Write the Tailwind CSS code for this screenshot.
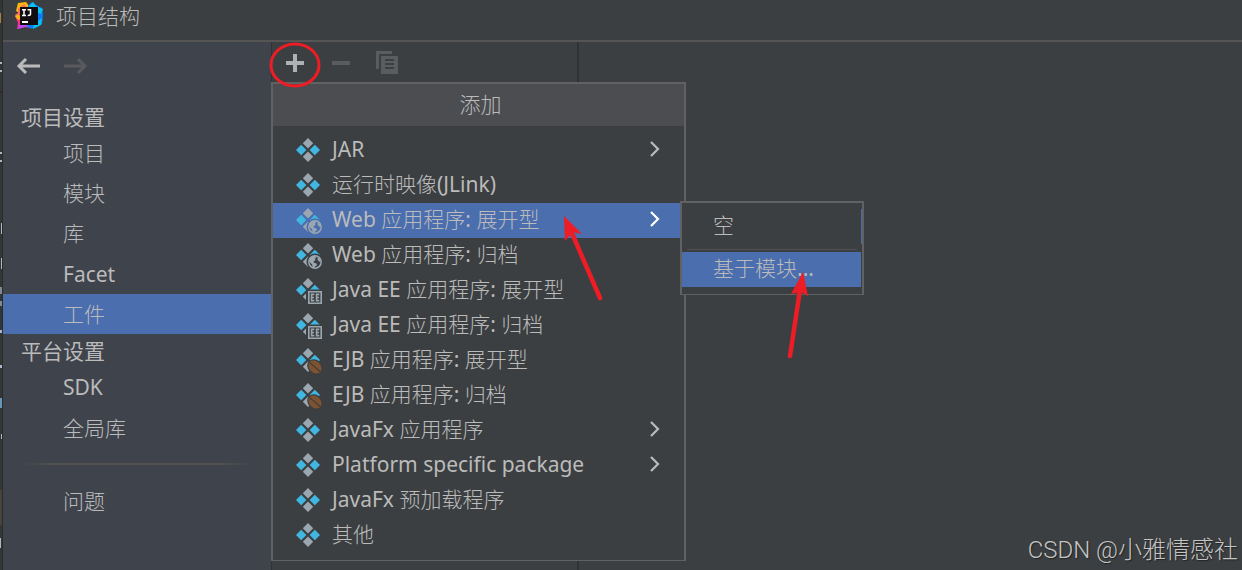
<!DOCTYPE html>
<html lang="zh-CN">
  <head>
    <meta charset="UTF-8" />
    <meta name="viewport" content="width=device-width, initial-scale=1.0" />
    <title>项目结构</title>
    <script src="https://cdn.jsdelivr.net/npm/@tailwindcss/browser@4"></script>
  </head>
  <body
    class="relative flex h-screen overflow-hidden bg-[#3c3f41] font-['Noto_Sans','Noto_Sans_CJK_SC_Light','Noto_Sans_CJK_SC',sans-serif] text-[21px] leading-[33px] text-[#bbbbbb]"
  >
    <!-- shared icons -->
    <svg class="hidden">
      <symbol id="artifact" viewBox="0 0 28 28">
        <path fill="#9aa7b0" d="M13 1l5.200 5.200L13 11.400 7.800 6.200zM13 14.600l5.200 5.200L13 25l-5.200-5.200z" />
        <path fill="#40b6e0" d="M6.200 7.800l5.200 5.200-5.200 5.200L1 13zM19.800 7.800L25 13l-5.200 5.200-5.200-5.200z" />
      </symbol>
      <symbol id="globe" viewBox="0 0 14 14">
        <circle cx="7" cy="7" r="6.200" fill="none" stroke="#9aa7b0" stroke-width="1.500" />
        <path fill="#9aa7b0" d="M1 4L3.500 1.500 7 .8l1.500 1.400-1.500 1L7.500 5 5.500 6.500l.5 1.300 2.500.7.5 1.700-2 1.300L6.500 13 4.500 12 4.200 9.500 1.500 7zM9.500 2.500L12 4l.8 3-1.800-.5-1.500-2z" />
      </symbol>
      <symbol id="ee" viewBox="0 0 14 13">
        <path fill="none" stroke="#9aa7b0" stroke-width="1.600" d="M.8.800h12.400v11.400H.8z" />
        <path fill="none" stroke="#9aa7b0" stroke-width="1.600" d="M6.300 3.400H3.600v6.200h2.700M3.600 6.500H6M11.300 3.400H8.600v6.200h2.700M8.600 6.500H11" />
      </symbol>
      <symbol id="bean" viewBox="0 0 16 16">
        <ellipse cx="8" cy="8" rx="8.500" ry="7" fill="#3c3f41" transform="rotate(45 8 8)" />
        <ellipse cx="8" cy="8" rx="7.300" ry="5.600" fill="#7f5230" transform="rotate(45 8 8)" />
        <path fill="none" stroke="#3c3f41" stroke-width="1.200" d="M2.500 3.500L8 8l5.500 5" />
      </symbol>
      <symbol id="chevron" viewBox="0 0 12 16">
        <path fill="none" stroke="currentColor" stroke-width="2.200" d="M2 1l7 7-7 7" />
      </symbol>
    </svg>

    <!-- editor edge behind the dialog -->
    <div aria-hidden="true" class="w-[3px] shrink-0 border-r border-[#2b2b2b] bg-[#323634]">
      <svg class="h-[570px] w-[2px]" viewBox="0 0 2 570" fill="#a9b7c6">
        <path fill="#b07a45" d="M0 13h1v10H0z" />
        <path fill="#2b2b2b" d="M0 91h2v2H0z" />
        <path d="M0 62h2v2H0zM0 70h2v2H0zM0 152h2v2H0zM0 160h2v2H0zM1 223h1v11H1zM1 258h1v11H1z" />
        <path fill="#7f8b91" d="M0 287h2v7H0zM0 301h2v5H0z" />
        <path d="M0 330h2v3H0zM0 365h2v3H0zM1 434h1v5H1zM0 538h1v10H0z" />
        <path fill="#6897bb" d="M0 398h2v10H0z" />
        <path fill="#49443a" d="M0 490h2v35H0z" />
      </svg>
    </div>

    <main class="flex min-w-0 flex-1 flex-col">
      <header class="flex h-[42px] shrink-0 items-start gap-[13px] border-b-2 border-[#555555] pl-3">
        <svg class="mt-[2px] size-[28px]" viewBox="0 0 28 28">
          <path fill="#fdb60d" d="M3 1l8-1 3 4-8 8-5-3z" />
          <path fill="#fe6f61" d="M3 7l6-5 7 9-8 10-5-4-3-4 3-2z" />
          <path fill="#fe2e83" d="M0 14l6-3 5 14-9 2 1-6z" />
          <path fill="#fdb60d" d="M0 14l4-2 2 5-3 1z" />
          <path fill="#b74af7" d="M5 20l9-2 2 8-6-1-7 2z" />
          <path fill="#087cfa" d="M13 4l4-4 4 3 6 3 1 7-1 9-10 5-5-3z" />
          <path fill="#07c3f2" d="M14 4l4-4 3 4 7 3-2 5-9-3zM19 22l8-6-1 7-8 4z" />
          <path fill="#100c10" d="M5 5h18v18H5z" />
          <path fill="none" stroke="#ffffff" stroke-width="1.500" d="M7 7.800h4M9 8v5.500M7 13.500h4M12.500 7.800h3v4.200q0 1.500-2.800 1.500" />
          <path fill="#ffffff" d="M7 19h6v2H7z" />
        </svg>
        <h1 class="leading-8">项目结构</h1>
      </header>

      <div class="flex min-h-0 flex-1">
        <aside class="w-[268px] shrink-0 bg-[#3f434c]">
          <div class="flex h-12 items-center gap-6 pl-[13px]">
            <button type="button" aria-label="后退" class="text-[#bbbbbb]">
              <svg class="h-[18px] w-6" viewBox="0 0 24 18" fill="none" stroke="currentColor" stroke-width="3">
                <path d="M24 9H3M10 2L3 9l7 7" />
              </svg>
            </button>
            <button type="button" aria-label="前进" disabled class="text-[#585a5c]">
              <svg class="h-[18px] w-6" viewBox="0 0 24 18" fill="none" stroke="currentColor" stroke-width="3">
                <path d="M0 9h21M14 2l7 7-7 7" />
              </svg>
            </button>
          </div>
          <nav class="pt-[10px] leading-10">
            <h2 class="h-[34px] pl-[18px] font-['Noto_Sans_CJK_SC',sans-serif] leading-8">项目设置</h2>
            <a href="#" class="block h-10 pl-[60px] leading-[38px]">项目</a>
            <a href="#" class="block h-10 pl-[60px] leading-[38px]">模块</a>
            <a href="#" class="block h-10 pl-[60px] leading-[38px]">库</a>
            <a href="#" class="block pl-[60px]">Facet</a>
            <a href="#" aria-current="page" class="block bg-[#4b6eaf] pl-[60px]">工件</a>
            <h2 class="h-[34px] pl-[18px] font-['Noto_Sans_CJK_SC',sans-serif] leading-8">平台设置</h2>
            <a href="#" class="block h-10 pl-[60px] leading-[38px]">SDK</a>
            <a href="#" class="block pl-[60px]">全局库</a>
            <div class="mx-4 mt-[15px] mb-4 h-[2px] bg-[linear-gradient(to_right,transparent,#515151_15%,#515151_85%,transparent)]"></div>
            <a href="#" class="block pl-[60px]">问题</a>
          </nav>
        </aside>

        <section class="relative w-[308px] shrink-0 border-r-2 border-l border-[#323232]">
          <div class="flex h-[42px] items-center gap-6 pl-3">
            <button type="button" aria-label="添加">
              <svg class="size-[22px]" viewBox="0 0 22 22">
                <path stroke="#afb1b3" stroke-width="4" d="M11 2v18M2 11h18" />
              </svg>
            </button>
            <button type="button" aria-label="移除" disabled>
              <svg class="size-[22px]" viewBox="0 0 22 22">
                <path stroke="#595b5d" stroke-width="4" d="M2 11h18" />
              </svg>
            </button>
            <button type="button" aria-label="复制" disabled>
              <svg class="size-6" viewBox="0 0 24 24">
                <path fill="#5a5c5e" d="M0 0h16v3H3v15H0z" />
                <path fill="#5a5c5e" fill-rule="evenodd" d="M5 5h17v18H5zM9 8v2h9V8zM9 12v2h9v-2zM9 16v2h9v-2z" />
              </svg>
            </button>
          </div>

          <!-- add menu -->
          <div class="absolute top-10 -left-px z-10 w-[415px] border-2 border-b border-[#616161] bg-[#3c3f41]">
            <h2 class="h-[42px] bg-[#4b4d51] pl-1 text-center leading-10">添加</h2>
            <ul class="py-[7px]">
              <li>
                <button type="button" class="flex h-[35px] w-full items-start gap-[9px] pr-[23px] pl-[22px] text-left">
                  <svg class="mt-1 size-7"><use href="#artifact" /></svg>
                  <span class="flex-1">JAR</span>
                  <svg class="mt-2 h-4 w-3"><use href="#chevron" /></svg>
                </button>
              </li>
              <li>
                <button type="button" class="flex h-[35px] w-full items-start gap-[9px] pr-[23px] pl-[22px] text-left">
                  <svg class="mt-1 size-7"><use href="#artifact" /></svg>
                  <span>运行时映像(JLink)</span>
                </button>
              </li>
              <li>
                <button type="button" class="flex h-[35px] w-full items-start gap-[9px] bg-[#4b6eaf] pr-[23px] pl-[22px] text-left">
                  <svg class="mt-1 size-7">
                    <use href="#artifact" />
                    <circle cx="20" cy="20" r="8.500" fill="#4b6eaf" />
                    <use href="#globe" x="13" y="13" width="14" height="14" />
                  </svg>
                  <span class="flex-1">Web 应用程序: 展开型</span>
                  <svg class="mt-2 h-4 w-3 text-white"><use href="#chevron" /></svg>
                </button>
              </li>
              <li>
                <button type="button" class="flex h-[35px] w-full items-start gap-[9px] pr-[23px] pl-[22px] text-left">
                  <svg class="mt-1 size-7">
                    <use href="#artifact" />
                    <circle cx="20" cy="20" r="8.500" fill="#3c3f41" />
                    <use href="#globe" x="13" y="13" width="14" height="14" />
                  </svg>
                  <span>Web 应用程序: 归档</span>
                </button>
              </li>
              <li>
                <button type="button" class="flex h-[35px] w-full items-start gap-[9px] pr-[23px] pl-[22px] text-left">
                  <svg class="mt-1 size-7">
                    <use href="#artifact" />
                    <path fill="#3c3f41" d="M11 12.500h17V28H11z" />
                    <use href="#ee" x="13" y="14" width="14" height="13" />
                  </svg>
                  <span>Java EE 应用程序: 展开型</span>
                </button>
              </li>
              <li>
                <button type="button" class="flex h-[35px] w-full items-start gap-[9px] pr-[23px] pl-[22px] text-left">
                  <svg class="mt-1 size-7">
                    <use href="#artifact" />
                    <path fill="#3c3f41" d="M11 12.500h17V28H11z" />
                    <use href="#ee" x="13" y="14" width="14" height="13" />
                  </svg>
                  <span>Java EE 应用程序: 归档</span>
                </button>
              </li>
              <li>
                <button type="button" class="flex h-[35px] w-full items-start gap-[9px] pr-[23px] pl-[22px] text-left">
                  <svg class="mt-1 size-7">
                    <use href="#artifact" />
                    <use href="#bean" x="12" y="12" width="16" height="16" />
                  </svg>
                  <span>EJB 应用程序: 展开型</span>
                </button>
              </li>
              <li>
                <button type="button" class="flex h-[35px] w-full items-start gap-[9px] pr-[23px] pl-[22px] text-left">
                  <svg class="mt-1 size-7">
                    <use href="#artifact" />
                    <use href="#bean" x="12" y="12" width="16" height="16" />
                  </svg>
                  <span>EJB 应用程序: 归档</span>
                </button>
              </li>
              <li>
                <button type="button" class="flex h-[35px] w-full items-start gap-[9px] pr-[23px] pl-[22px] text-left">
                  <svg class="mt-1 size-7"><use href="#artifact" /></svg>
                  <span class="flex-1">JavaFx 应用程序</span>
                  <svg class="mt-2 h-4 w-3"><use href="#chevron" /></svg>
                </button>
              </li>
              <li>
                <button type="button" class="flex h-[35px] w-full items-start gap-[9px] pr-[23px] pl-[22px] text-left">
                  <svg class="mt-1 size-7"><use href="#artifact" /></svg>
                  <span class="flex-1">Platform specific package</span>
                  <svg class="mt-2 h-4 w-3"><use href="#chevron" /></svg>
                </button>
              </li>
              <li>
                <button type="button" class="flex h-[35px] w-full items-start gap-[9px] pr-[23px] pl-[22px] text-left">
                  <svg class="mt-1 size-7"><use href="#artifact" /></svg>
                  <span>JavaFx 预加载程序</span>
                </button>
              </li>
              <li>
                <button type="button" class="flex h-[35px] w-full items-start gap-[9px] pr-[23px] pl-[22px] text-left">
                  <svg class="mt-1 size-7"><use href="#artifact" /></svg>
                  <span>其他</span>
                </button>
              </li>
            </ul>

            <!-- submenu -->
            <div class="absolute top-[117px] left-[407px] w-[184px] border-2 border-b border-[#616161] bg-[#3c3f41] pt-[6px] pb-[7px]">
              <button type="button" class="flex h-[35px] w-full items-start border-r border-[#4b6eaf] pl-[31px]">空</button>
              <div class="mx-[5px] mt-[5px] mb-[2px] h-px bg-[#515151]"></div>
              <button type="button" class="flex h-[35px] w-[179px] items-start bg-[#4b6eaf] pl-[31px]">基于模块...</button>
            </div>
          </div>
        </section>

        <section class="flex flex-1 items-end justify-end pr-1">
          <p class="font-[Roboto,'Noto_Sans_CJK_SC',sans-serif] text-2xl leading-10 font-light text-[#c4c4c4] text-shadow-[1px_1px_1px_#222222]">CSDN @小雅情感社</p>
        </section>
      </div>
    </main>

    <!-- red markers -->
    <svg class="pointer-events-none absolute top-0 left-0 z-20 h-[570px] w-[1242px]" viewBox="0 0 1242 570" fill="#ee1c25" stroke="#ee1c25">
      <ellipse cx="295" cy="65" rx="24" ry="21" fill="none" stroke-width="3" />
      <path stroke="none" d="M564 216l18 18-9-2-8 9z" />
      <path stroke-width="4.500" stroke-linecap="round" d="M571 231l29 67" />
      <path stroke="none" d="M803 272l5 24-7-4-10 2z" />
      <path stroke-width="4.500" stroke-linecap="round" d="M800 290l-10 66" />
    </svg>
  </body>
</html>
